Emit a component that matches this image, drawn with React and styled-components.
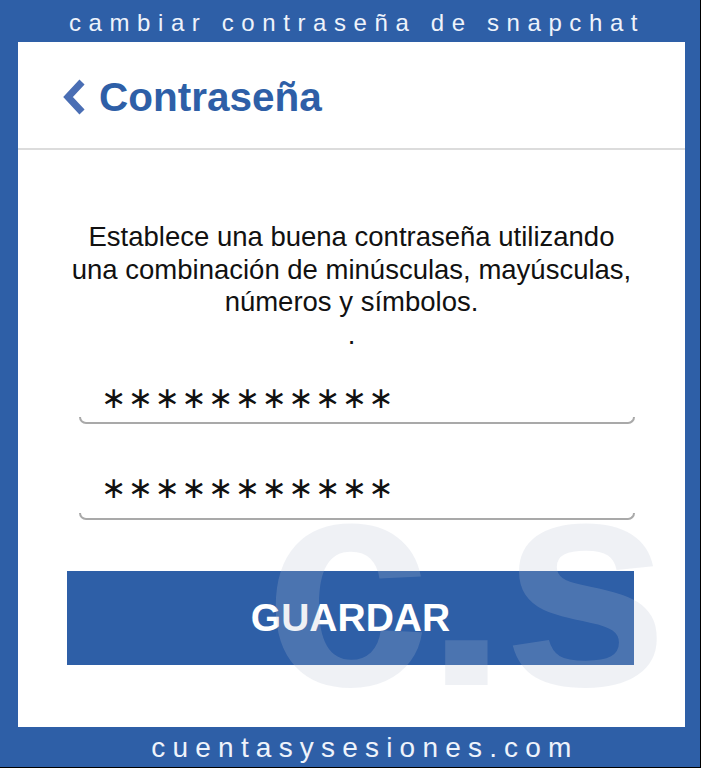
import React from 'react'
import styled, { createGlobalStyle } from 'styled-components'

const Global = createGlobalStyle`
  html, body { margin: 0; padding: 0; background: #2e5fa7; }
  * { box-sizing: border-box; }
`

const Frame = styled.div`
  width: 701px;
  height: 768px;
  background: #2e5fa7;
  border-right: 1px solid #000;
  border-bottom: 1px solid #000;
  display: flex;
  flex-direction: column;
  font-family: "Liberation Sans", Arial, sans-serif;
`

const Banner = styled.div`
  height: ${p => p.$h}px;
  display: flex;
  align-items: center;
  justify-content: center;
  color: #eef3fb;
  font-size: ${p => p.$size}px;
  letter-spacing: ${p => p.$spacing}px;
  padding-left: ${p => p.$left}px;
  padding-top: ${p => p.$top || 0}px;
`

const Panel = styled.div`
  position: relative;
  overflow: hidden;
  height: 685px;
  margin: 0 15px 0 18px;
  background: #fff;
  display: flex;
  flex-direction: column;
`

const Header = styled.div`
  height: 108px;
  border-bottom: 2px solid #dcdcdc;
  display: flex;
  align-items: center;
  gap: 12px;
  padding: 4px 0 0 43px;
`

const Title = styled.h1`
  margin: 0;
  font-size: 40.5px;
  font-weight: bold;
  color: #2e5fa7;
`

const Body = styled.div`
  flex: 1;
  display: flex;
  flex-direction: column;
  align-items: flex-start;
  padding-top: 71px;
`

const Intro = styled.p`
  margin: 0;
  align-self: center;
  text-align: center;
  font-size: 27.5px;
  line-height: 32.5px;
  color: #111;
`

const Field = styled.div`
  width: 556px;
  margin: ${p => p.$gap}px 0 0 61px;
`

const Stars = styled.div`
  font-family: "DejaVu Sans", sans-serif;
  font-size: 30px;
  letter-spacing: 1.6px;
  line-height: 30px;
  padding-left: 22px;
  color: #111;
`

const Underline = styled.div`
  height: 7px;
  margin-top: ${p => p.$offset}px;
  border: 2px solid #a9a9a9;
  border-top: none;
  border-radius: 0 0 7px 7px;
`

const SaveButton = styled.button`
  width: 567px;
  height: 94px;
  margin: 51px 0 0 49px;
  border: none;
  background: #2e5fa7;
  color: #fff;
  font-family: "Liberation Sans", Arial, sans-serif;
  font-size: 39px;
  font-weight: bold;
`

const Watermark = styled.div`
  position: absolute;
  left: 246px;
  top: 389px;
  font-family: "Liberation Sans", Arial, sans-serif;
  font-weight: bold;
  font-size: 300px;
  line-height: 1;
  letter-spacing: -6px;
  color: rgba(180, 190, 208, 0.22);
  pointer-events: none;
`

const Chevron = () => (
  <svg width="26" height="36" viewBox="0 0 26 36">
    <polyline points="21,3 7,18 21,33" fill="none" stroke="#4a6eb4" strokeWidth="7" strokeLinejoin="miter" />
  </svg>
)

export default function App() {
  return (
    <>
      <Global />
      <Frame>
        <Banner $h={42} $size={24} $spacing={7.6} $left={14} $top={4}>cambiar contraseña de snapchat</Banner>
        <Panel>
          <Header>
            <Chevron />
            <Title>Contraseña</Title>
          </Header>
          <Body>
            <Intro>
              Establece una buena contraseña utilizando<br />
              una combinación de minúsculas, mayúsculas,<br />
              números y símbolos.<br />
              .
            </Intro>
            <Field $gap={32}>
              <Stars>∗∗∗∗∗∗∗∗∗∗∗</Stars>
              <Underline $offset={4} />
            </Field>
            <Field $gap={49}>
              <Stars>∗∗∗∗∗∗∗∗∗∗∗</Stars>
              <Underline $offset={10} />
            </Field>
            <SaveButton>GUARDAR</SaveButton>
          </Body>
          <Watermark>c.s</Watermark>
        </Panel>
        <Banner $h={40} $size={28} $spacing={7.2} $left={30} $top={2}>cuentasysesiones.com</Banner>
      </Frame>
    </>
  )
}
